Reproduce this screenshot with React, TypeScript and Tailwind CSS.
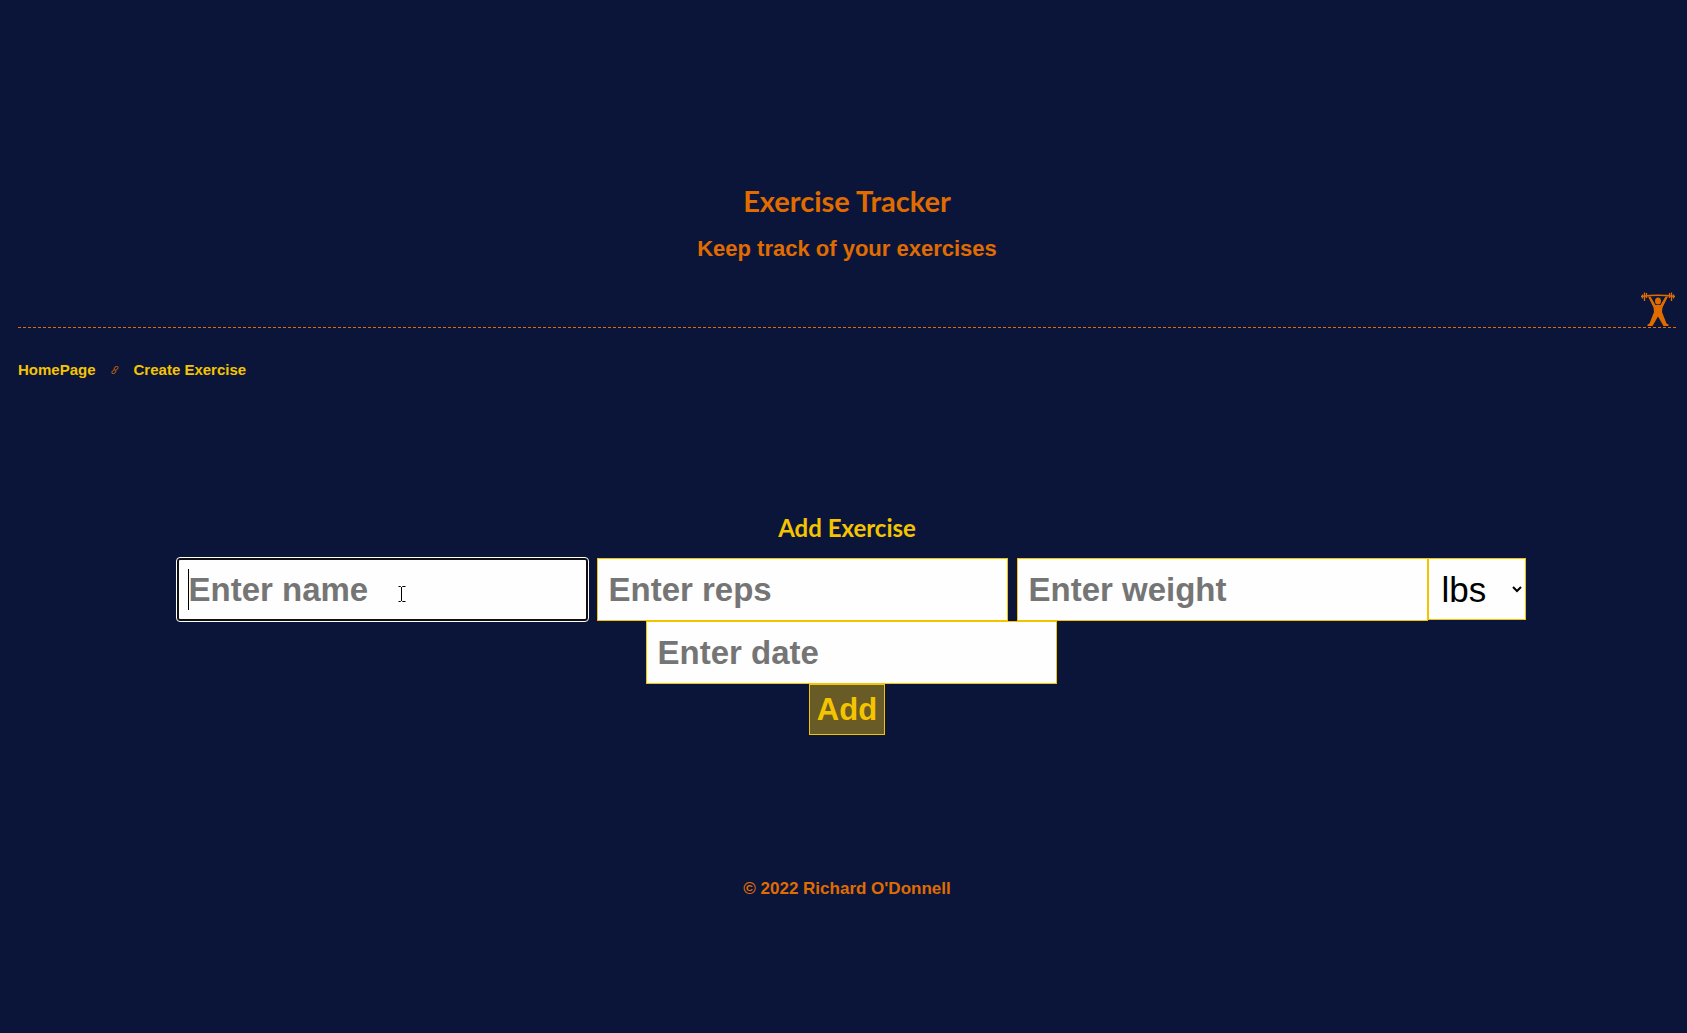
const field =
  "block h-[63px] w-[411px] border border-[#f5c400] bg-[#fefefe] px-[11px] text-[33px] font-bold text-black placeholder:text-[#757575] placeholder:opacity-100";

function Lifter() {
  return (
    <svg viewBox="0 0 34 34" className="size-[34px]" fill="#e06c00" aria-hidden="true">
      <path d="M0 4.500Q17 2 34 4.500" fill="none" stroke="#e06c00" strokeWidth="1.500" />
      <path d="M1.500 2.500v4M3.500 0.500v8.500M5.500 1v5M28.500 1v5M30.500 0.500v8.500M32.500 2.500v4" stroke="#e06c00" strokeWidth="1.300" />
      <ellipse cx="17" cy="9" rx="3" ry="3.500" />
      <path d="M7 4.500h2.500l5 8.500h5l5-8.500H27L21.500 15.500 21 20l4.500 11.500 2 1V34h-5L17 24.500 11.500 34h-5v-1.500l2-1L13 20l-.5-4.500z" />
    </svg>
  );
}

function LinkIcon() {
  return (
    <svg viewBox="0 0 24 24" className="size-2" fill="none" stroke="#b05a10" strokeWidth="3" aria-hidden="true">
      <rect x="9" y="3" width="13" height="8" rx="4" transform="rotate(-45 15 7)" />
      <rect x="2" y="13" width="13" height="8" rx="4" transform="rotate(-45 9 17)" />
    </svg>
  );
}

export default function App() {
  return (
    <div className="min-h-screen bg-[#0b153a] pt-[183px] pr-[11px] pl-[18px] font-['Liberation_Sans',Arial,sans-serif] font-bold text-[#e06c00]">
      <header className="relative border-b border-dashed border-[#e06c00] pb-[65px] text-center">
        <h1 className="font-['Lato',sans-serif] text-[29px] leading-9 font-bold">Exercise Tracker</h1>
        <p className="mt-[17px] text-[22px] leading-[26px]">Keep track of your exercises</p>
        <div className="absolute right-px bottom-px">
          <Lifter />
        </div>
      </header>
      <nav className="mt-8 flex items-center text-[15px] leading-5 text-[#f5c400]">
        <a href="#home">HomePage</a>
        <span className="mx-[15px]">
          <LinkIcon />
        </span>
        <a href="#create">Create Exercise</a>
      </nav>
      <main className="mt-[132px] text-[#f5c400]">
        <h2 className="text-center font-['Lato',sans-serif] text-[24px] leading-8 font-bold">Add Exercise</h2>
        <form className="mt-[14px] flex flex-col items-center" onSubmit={(e) => e.preventDefault()}>
          <div className="flex flex-wrap items-start justify-center gap-x-[9px] pl-2">
            <div className="relative">
              <input
                aria-label="Enter name"
                placeholder="Enter name"
                className="block h-[63px] w-[411px] rounded-[3px] border-2 border-[#101010] bg-[#fefefe] px-[10px] text-[33px] font-bold text-black outline outline-white placeholder:text-[#757575] placeholder:opacity-100"
              />
              <span className="pointer-events-none absolute top-[11px] left-[11px] h-[41px] w-px bg-black" />
              <svg viewBox="0 0 8 16" className="pointer-events-none absolute top-7 left-[221px] h-4 w-2" fill="none" stroke="#000" aria-hidden="true">
                <path d="M.5.5h2l1 1 1-1h3M3.500 1v14M.5 15.500h2l1-1 1 1h3" />
              </svg>
            </div>
            <input aria-label="Enter reps" placeholder="Enter reps" className={field} />
            <div className="flex items-start">
              <input aria-label="Enter weight" placeholder="Enter weight" className={field} />
              <select aria-label="Unit" className="h-[62px] w-[98px] border border-[#f5c400] bg-[#fefefe] pl-[9px] text-[35px] font-normal text-black">
                <option>lbs</option>
                <option>kgs</option>
              </select>
            </div>
          </div>
          <div className="pl-2">
            <input aria-label="Enter date" placeholder="Enter date" className={field} />
          </div>
          <button type="submit" className="h-[51px] border border-[#f5c400] bg-[#695b25] px-[7px] text-[31px] leading-[49px] font-bold">
            Add
          </button>
        </form>
      </main>
      <footer className="mt-[144px] text-center text-[17px] leading-5">© 2022 Richard O'Donnell</footer>
    </div>
  );
}
